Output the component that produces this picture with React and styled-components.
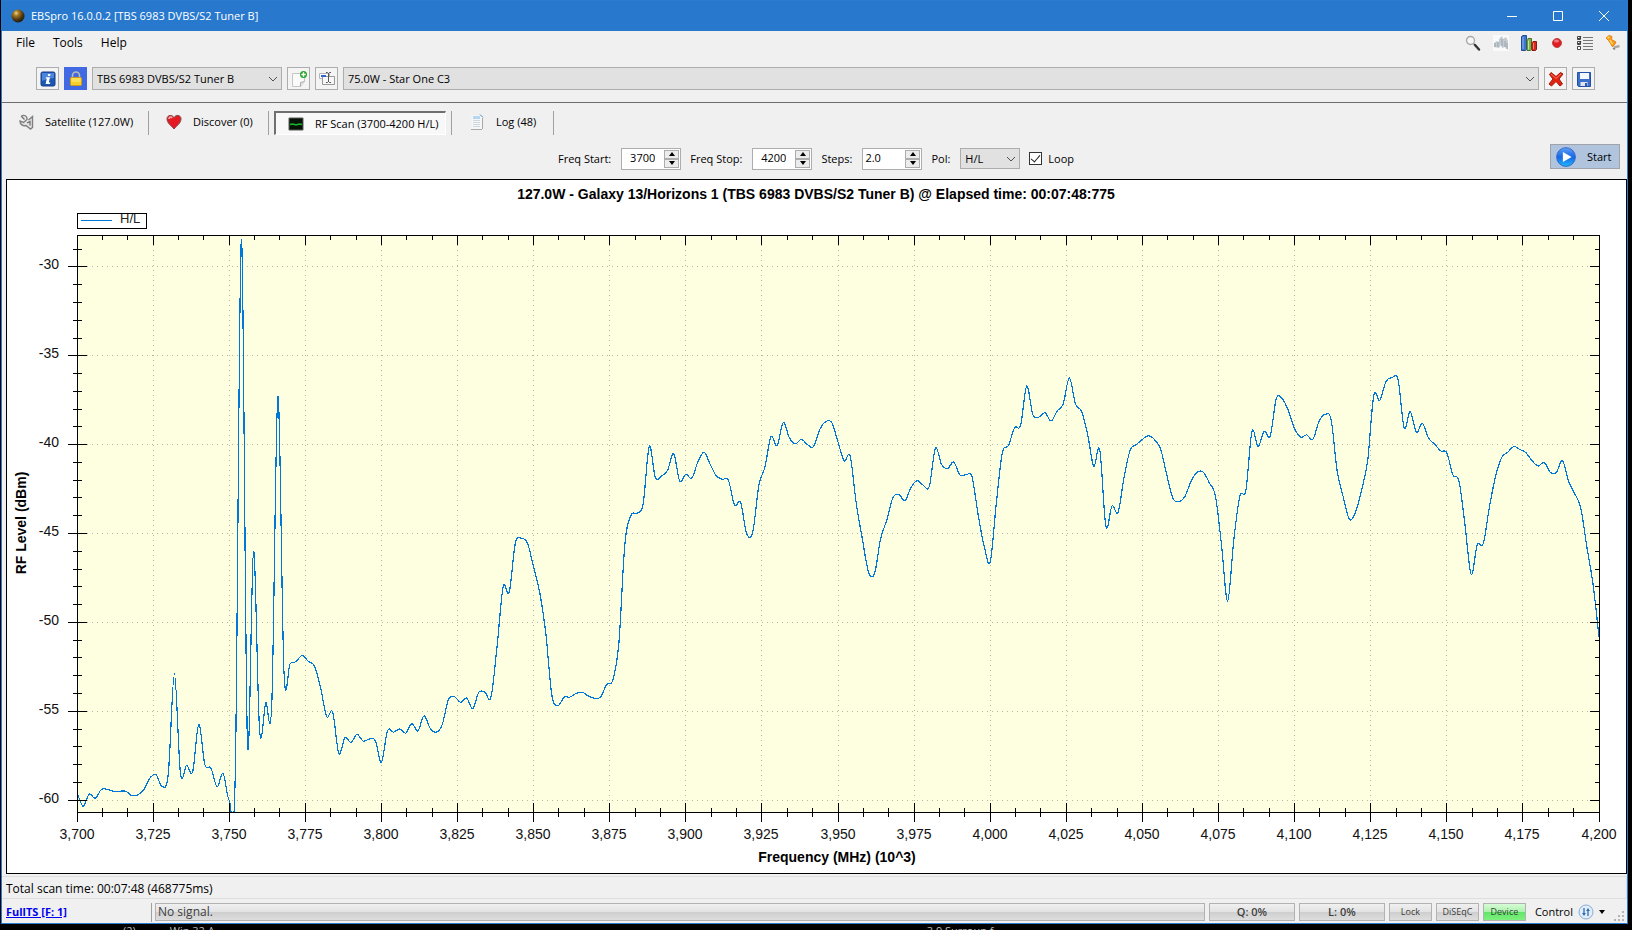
import React, { useState } from "react";
import styled, { createGlobalStyle } from "styled-components";

const GlobalStyle = createGlobalStyle`
  * {
    box-sizing: border-box;
  }
  body {
    margin: 0;
    background: #000;
    color: #000;
    font-family: "Open Sans", "Noto Sans", sans-serif;
    font-size: 11px;
    line-height: 16px;
  }
  button, input, select {
    margin: 0;
    padding: 0;
    font: inherit;
    color: inherit;
  }
`;

/* ---------- window ---------- */

const Desktop = styled.div`
  display: flex;
  flex-direction: column;
  min-height: 100vh;
  padding: 0 4px 0 1px;
`;

const Window = styled.main`
  flex: 1;
  display: flex;
  flex-direction: column;
  border: 1px solid #2b7cd0;
  background: #f0f0f0;
`;

const TitleBar = styled.header`
  display: flex;
  align-items: center;
  height: 30px;
  padding-left: 8px;
  gap: 5px;
  background: #2879cd;
  color: #fff;
  h1 {
    flex: 1;
    margin: 0;
    font-size: 11px;
    font-weight: 400;
  }
`;

const CaptionButtons = styled.div`
  display: flex;
`;

const CaptionButton = styled.button`
  display: flex;
  align-items: center;
  justify-content: center;
  width: 46px;
  height: 30px;
  border: 0;
  background: transparent;
`;

const MenuBar = styled.nav`
  display: flex;
  align-items: center;
  height: 24px;
  padding: 0 6px 0 14px;
`;

const MenuItem = styled.button`
  border: 0;
  background: transparent;
  font-size: 12px;
  margin-right: 18px;
`;

const QuickIcons = styled.div`
  display: flex;
  gap: 12px;
  margin-left: auto;
`;

const QuickButton = styled.button`
  width: 16px;
  height: 16px;
  border: 0;
  background: transparent;
  svg {
    display: block;
  }
`;

const DeviceBar = styled.div`
  display: flex;
  align-items: center;
  gap: 5px;
  height: 48px;
  padding: 0 32px 0 34px;
  border-bottom: 1px solid #6d6d6d;
`;

const SquareButton = styled.button`
  display: flex;
  align-items: center;
  justify-content: center;
  flex: none;
  width: 23px;
  height: 23px;
  border: 1px solid ${(p) => (p.$active ? "#4169e1" : "#adadad")};
  background: ${(p) => (p.$active ? "#4169e1" : "#f4f4f4")};
`;

const SelectBox = styled.div`
  position: relative;
  flex: ${(p) => (p.$width ? "none" : "1")};
  width: ${(p) => (p.$width ? `${p.$width}px` : "auto")};
  height: ${(p) => (p.$small ? 21 : 23)}px;
  select {
    width: 100%;
    height: 100%;
    padding: 0 20px 0 4px;
    border: 1px solid #adadad;
    border-radius: 0;
    background: #e1e1e1;
    appearance: none;
  }
  svg {
    position: absolute;
    top: 50%;
    right: 4px;
    margin-top: -3px;
    pointer-events: none;
  }
`;

/* ---------- tabs ---------- */

const TabBar = styled.div`
  display: flex;
  align-items: center;
  height: 40px;
  padding-left: 4px;
`;

const Tab = styled.button`
  display: flex;
  align-items: center;
  gap: 11px;
  width: ${(p) => p.$width}px;
  height: 24px;
  padding: ${(p) => (p.$active ? "0 0 0 12px" : "0 0 2px 11px")};
  border: 1px solid transparent;
  background: transparent;
  white-space: nowrap;
  ${(p) =>
    p.$active &&
    `
    border-color: #6f6f6f #fff #fff #6f6f6f;
    border-width: 2px 1px 1px 2px;
    background: #f8f8f8;
  `}
`;

const TabDivider = styled.span`
  width: 1px;
  height: 24px;
  margin: 0 5px;
  background: #a0a0a0;
`;

/* ---------- scan settings ---------- */

const ScanBar = styled.form`
  display: grid;
  grid-template-columns: 1fr auto 1fr;
  align-items: center;
  height: 36px;
  padding: 0 7px 9px 0;
`;

const ScanFields = styled.div`
  grid-column: 2;
  display: flex;
  align-items: center;
  gap: 9px;
  padding: 4px 0 0 10px;
`;

const Field = styled.label`
  display: flex;
  align-items: center;
  gap: 10px;
  white-space: nowrap;
`;

const CheckField = styled(Field)`
  gap: 6px;
  input {
    appearance: none;
    display: grid;
    place-items: center;
    width: 13px;
    height: 13px;
    border: 1px solid #333;
    background: #fff;
  }
  input:checked::after {
    content: "";
    width: 4px;
    height: 8px;
    margin-bottom: 2px;
    border: solid #222;
    border-width: 0 1px 1px 0;
    transform: rotate(40deg);
  }
`;

const SpinBox = styled.span`
  display: flex;
  width: 60px;
  height: 22px;
  padding: 1px;
  border: 1px solid #adadad;
  background: #fff;
  input {
    flex: 1;
    min-width: 0;
    height: 16px;
    padding: 0 9px 0 1px;
    border: 0;
    outline: 0;
    background: transparent;
    text-align: ${(p) => p.$align};
  }
`;

const SpinButtons = styled.span`
  display: grid;
  grid-template-rows: 1fr 1fr;
  width: 15px;
  button {
    display: flex;
    align-items: center;
    justify-content: center;
    border: 1px solid #adadad;
    background: #ececec;
  }
`;

const StartButton = styled.button`
  grid-column: 3;
  justify-self: end;
  display: flex;
  align-items: center;
  gap: 11px;
  width: 70px;
  height: 25px;
  padding-left: 5px;
  border: 1px solid #a0a3a8;
  background: #b0c4de;
`;

/* ---------- chart ---------- */

const ChartPanel = styled.section`
  flex: 1;
  min-height: 0;
  margin-left: 4px;
  border: 1px solid #000;
  background: #fff;
  svg {
    display: block;
    width: 100%;
    font-family: "Liberation Sans", Arial, sans-serif;
    font-size: 14px;
  }
`;

/* ---------- status ---------- */

const ScanStatus = styled.p`
  height: 23px;
  margin: 2px 0 0;
  padding: 4px 4px 0;
  border: 1px solid #dedede;
  border-left: 0;
  font-size: 12px;
`;

const StatusBar = styled.footer`
  display: flex;
  align-items: center;
  gap: 4px;
  height: 24px;
  padding: 2px 0 0 4px;
`;

const StreamLink = styled.a`
  width: 141px;
  color: #0000f0;
  font-weight: 700;
  font-size: 11px;
`;

const StatusDivider = styled.span`
  width: 1px;
  height: 19px;
  margin-right: -1px;
  background: #a0a0a0;
`;

const Gauge = styled.div`
  flex: ${(p) => (p.$width ? "none" : "1")};
  width: ${(p) => (p.$width ? `${p.$width}px` : "auto")};
  height: 18px;
  padding: 0 2px;
  border: 1px solid #b2b2b2;
  background: ${(p) =>
    p.$on
      ? "linear-gradient(#d8fbd8, #a9f3a9 50%, #5fe766 51%, #7ef07e)"
      : "linear-gradient(#f0f0f0, #e2e2e2 50%, #cecece 51%, #dedede)"};
  color: #404040;
  font-size: ${(p) => (p.$small ? 9 : p.$bold ? 11 : 12)}px;
  font-weight: ${(p) => (p.$bold ? 600 : 400)};
  text-align: ${(p) => (p.$width ? "center" : "left")};
`;

const ControlButton = styled.button`
  display: flex;
  align-items: center;
  gap: 5px;
  margin-left: 5px;
  border: 0;
  background: transparent;
`;

const Grip = styled.span`
  align-self: flex-end;
  margin: 0 2px 1px 5px;
  line-height: 0;
`;

// captions of whatever lies under the window
const Behind = styled.div`
  display: flex;
  height: 6px;
  overflow: hidden;
  padding-left: 122px;
  color: #bbb;
  line-height: 14px;
  span + span {
    margin-left: 34px;
  }
  span:last-child {
    margin-left: 712px;
  }
`;

/* ---------- icons ---------- */

const Icon = ({ size = 16, children }) => (
  <svg width={size} height={size} viewBox="0 0 16 16" fill="none" aria-hidden="true">
    {children}
  </svg>
);

const AppIcon = () => (
  <Icon>
    <defs>
      <radialGradient id="orb" cx="0.36" cy="0.28" r="0.8">
        <stop offset="0" stopColor="#f2d48a" />
        <stop offset="0.25" stopColor="#a67a25" />
        <stop offset="0.65" stopColor="#4a3410" />
        <stop offset="1" stopColor="#17130c" />
      </radialGradient>
    </defs>
    <circle cx="8" cy="8" r="6.5" fill="url(#orb)" />
  </Icon>
);

const SearchIcon = () => (
  <Icon>
    <circle cx="5.5" cy="5.5" r="4" fill="#f7f7f7" stroke="#a9a9a9" strokeWidth="1.4" />
    <path d="M8.5 8.5l1.5 1.5" stroke="#999" strokeWidth="1.5" />
    <path d="M10 10l4 4.5" stroke="#333" strokeWidth="2.4" strokeLinecap="round" />
  </Icon>
);

const BinocularsIcon = () => (
  <Icon>
    <rect width="16" height="16" fill="#fafafa" />
    <path d="M1 12V8l3-2 2 1V4l3-3 1 3 3-2 2 4v9l-3-3-3 1-1-3-2 3z" fill="#c3cbd0" />
    <path d="M2 12V8M5 12V7M9 11V4M12 12V6M14 14V8" stroke="#99a5ac" />
  </Icon>
);

const BarsIcon = () => (
  <Icon>
    <path d="M.5 1.5l1.5-1h3.500v14l-1 1h-4z" fill="#3f74cf" stroke="#224b96" />
    <path d="M2 2v12" stroke="#8db4f2" />
    <path d="M6 4.500l1-1h3.500v11l-1 1H6z" fill="#7fb24a" stroke="#47752a" />
    <path d="M7.500 5.500v9" stroke="#c7e29f" />
    <path d="M11 7.500l1-1h3.500v8l-1 1H11z" fill="#d9291c" stroke="#8d1713" />
    <path d="M12.500 8v6" stroke="#f48379" />
  </Icon>
);

const RecordIcon = () => (
  <Icon>
    <circle cx="8" cy="8" r="4.5" fill="#e01d20" stroke="#b9484b" />
    <ellipse cx="7.5" cy="6" rx="2.5" ry="1.5" fill="#f4787b" />
  </Icon>
);

const ListIcon = () => (
  <Icon>
    <path d="M6 2.500h10M6 5.500h10M6 8.500h10M6 11.500h10M6 14.500h10" stroke="#777" />
    <path d="M.5 1.500h3v3h-3zM.5 6.500h3v3h-3zM.5 11.500h3v3h-3z" fill="#fff" stroke="#444" />
    <path d="M1 3l1 1 2-3M1 8l1 1 2-3" stroke="#333" />
  </Icon>
);

const PinIcon = () => (
  <Icon>
    <path d="M9 12.500l5.500-1.500" stroke="#aaa" strokeWidth="2.5" />
    <path d="M1 3l3-2.500 3 1-.5 3L11 7l-1 2-2.500 3-2-3.500-2-3z" fill="#f79b18" stroke="#e4871a" />
    <path d="M2.500 3l2-1M5 5l2.500 4" stroke="#ffd36c" strokeWidth="1.5" />
    <path d="M8 13l2 1.500" stroke="#777" strokeWidth="1.5" />
  </Icon>
);

const InfoIcon = () => (
  <Icon>
    <rect x="1" y="1" width="14" height="14" rx="1.5" fill="#1d57b4" stroke="#163f86" />
    <path d="M2 2h12v5Q8 7 2 10z" fill="#4b86dc" />
    <path d="M8.200 3h2.300l-.4 2H7.800zM6 6.200h4L8.800 11.500h1.500l-.4 1.500H5.600l1.200-5.500H5.700z" fill="#fff" />
  </Icon>
);

const LockIcon = () => (
  <Icon>
    <path d="M4.500 7V4.500a3.500 3.500 0 0 1 7 0V7" stroke="#b9bcae" strokeWidth="1.6" />
    <rect x="2.5" y="6.5" width="11" height="8" rx="1" fill="#f6cf2e" stroke="#c99b17" />
    <path d="M3.500 8h9M3.500 10h9" stroke="#ffee86" />
  </Icon>
);

const NewPageIcon = () => (
  <Icon>
    <path d="M1.500 2.500h12v8l-4 5h-8z" fill="#fafafa" stroke="#c5c5c5" />
    <path d="M9.500 15.500v-4l4-1" stroke="#aaa" fill="#e6e6e6" />
    <circle cx="12.5" cy="3.5" r="3.5" fill="#27a52c" />
    <path d="M12.500 1.300v4.400M10.300 3.500h4.400" stroke="#fff" strokeWidth="1.4" />
  </Icon>
);

const RenameIcon = () => (
  <Icon>
    <path d="M.5 2.500h10v5H.5z" fill="#fff" stroke="#b5b5b5" />
    <path d="M2 4h5v2H2z" fill="#2f66d0" />
    <path d="M3.500 5.500h12v8h-12z" fill="#f7f7f7" stroke="#999" />
    <path d="M2 4.500h5v1.500H2z" fill="#2f66d0" />
    <path d="M9.500 2v9M7 1.500h1.500l1 1 1-1H12M7 11.500h1.500l1-1 1 1H12" stroke="#555" />
  </Icon>
);

const DeleteIcon = () => (
  <Icon>
    <path
      d="M3 1.500l5 4 4.500-4L15 3l-4 5 3.500 5-2.500 2-4-4.500L3.500 15 1 13l4-5-3.500-4.500z"
      fill="#e2230f"
      stroke="#a5170c"
    />
    <path d="M3 3l5 4.500L13 3" stroke="#f8745e" />
  </Icon>
);

const SaveIcon = () => (
  <Icon>
    <path d="M1.500 1.500h13v14h-12l-1-1z" fill="#3c6fca" stroke="#234fa4" />
    <path d="M4 2h9v6H4z" fill="#f3f7ff" />
    <path d="M4.500 11h7v4h-7z" fill="#e1e5ea" />
    <path d="M9 12h2v3H9z" fill="#2a5bb7" />
  </Icon>
);

const DishIcon = () => (
  <Icon>
    <path
      d="M3 2.500C6 0 9.500 2 9 5.500L5.500 8.500 2 7c0 3.500 3 5.500 6 4.500l4.500 3.500 2-1.500V2.500L10.500 6"
      fill="#e4e4e4"
      stroke="#7f7f7f"
      strokeWidth="1.4"
    />
    <path d="M3.500 2.500l3 3M9 9l3-1.500v4" stroke="#6a6a6a" strokeWidth="1.2" />
  </Icon>
);

const HeartIcon = () => (
  <Icon>
    <path
      d="M8 15C5 11.500 1 9 1 4.800 1 .8 6.500.2 8 3.800c1.500-3.600 7-3 7 1C15 9 11 11.500 8 15z"
      fill="#e31a22"
      stroke="#7f4a4c"
    />
    <path d="M3 5c.2-2 2-2.500 3.200-1.200" stroke="#ffaaad" strokeWidth="1.7" />
  </Icon>
);

const ScopeIcon = () => (
  <Icon>
    <path d="M1 2h14v12H1z" fill="#051305" stroke="#5a5a5a" />
    <path d="M2 8.500l3-.5 3 1 3-1 3 .5" stroke="#18b52b" strokeWidth="1.4" />
  </Icon>
);

const LogIcon = () => (
  <Icon>
    <path d="M2.500 1h9l2 2v12h-11z" fill="#f4f6f8" />
    <path d="M2 15.500h11M13.500 4v11" stroke="#a9a9a9" />
    <path d="M4 3.500h7" stroke="#b7d6ef" strokeWidth="3" />
    <path d="M4 6.500h7M4 8.500h7M4 10.500h7M4 12.500h7" stroke="#cfd6dc" />
    <path d="M11 .5l3 3" stroke="#4f86ad" />
  </Icon>
);

const PlayIcon = () => (
  <Icon size={20}>
    <defs>
      <linearGradient id="play" x2="0" y2="1">
        <stop offset="0" stopColor="#5fa0f5" />
        <stop offset="0.5" stopColor="#1767e6" />
        <stop offset="1" stopColor="#22b7fb" />
      </linearGradient>
    </defs>
    <circle cx="8" cy="8" r="7.5" fill="url(#play)" stroke="#2a5fc4" strokeWidth="0.7" />
    <path d="M5.500 4l7 4-7 4z" fill="#fff" />
  </Icon>
);

const ControlIcon = () => (
  <Icon>
    <circle cx="8" cy="8" r="7" fill="#e3edf8" stroke="#86add8" />
    <path d="M6 4v6M10 6v6" stroke="#2f6fb8" strokeWidth="1.3" />
    <path d="M4 9l2 3 2-3zM8 7l2-3 2 3z" fill="#2f6fb8" />
  </Icon>
);

const Chevron = () => (
  <svg width="10" height="6" viewBox="0 0 10 6" fill="none" aria-hidden="true">
    <path d="M1 1l4 4 4-4" stroke="#505050" />
  </svg>
);

const Triangle = ({ down, size = 6 }) => (
  <svg width={size} height={size / 2 + 1} viewBox="0 0 6 4" aria-hidden="true">
    <path d={down ? "M0 0h6L3 4z" : "M0 4h6L3 0z"} fill="#000" />
  </svg>
);

/* ---------- scan data ---------- */

// RF level in dBm, one reading every 2 MHz from 3700 to 4200
const LEVELS = [
  -59.55, -60.35, -59.66, -59.9, -59.4, -59.4, -59.5, -59.5, -59.5, -59.75,
  -59.7, -59.4, -58.75, -58.58, -59.25, -58.5, -52.9, -58.5, -58.05, -58.4,
  -55.75, -58, -58.2, -59.25, -58.5, -60, -58.5, -28.46, -56.75, -45.99,
  -56.1, -54.53, -54.5, -37.27, -52.8, -52.32, -52.2, -51.85, -52.2, -52.45,
  -53.65, -55.3, -55.05, -57.37, -56.5, -56.75, -56.3, -56.68, -56.57, -56.65,
  -57.87, -56.1, -56.18, -56, -56.23, -55.7, -56.1, -55.26, -55.95, -56.18,
  -55.75, -54.35, -54.18, -54.5, -54.25, -54.85, -53.93, -53.93, -54.2, -51.35,
  -48, -48.3, -45.55, -45.27, -45.55, -46.9, -48.3, -50.6, -54.1, -54.68,
  -54.22, -54.2, -54, -53.93, -54.15, -54.27, -54.2, -53.5, -53.25, -51.2,
  -45.55, -43.97, -43.87, -43.3, -40.1, -41.85, -41.76, -41.45, -40.5, -42.05,
  -41.67, -41.87, -40.95, -40.43, -41.1, -41.75, -41.95, -42, -43.4, -43.25,
  -45, -44.9, -42.3, -41.25, -39.55, -40.05, -38.75, -39.6, -39.95, -39.7,
  -40, -40.1, -39.15, -38.7, -38.77, -39.85, -40.9, -40.65, -43.3, -45.3,
  -47.15, -47.25, -45.3, -44.25, -43, -42.8, -43.15, -42.4, -42.02, -42.28,
  -42.35, -40.2, -41.1, -41.35, -40.97, -41.7, -41.7, -41.8, -43.9, -45.7,
  -46.6, -43.3, -40.45, -40.05, -39.05, -38.9, -36.7, -38.3, -38.45, -38.2,
  -38.67, -38.1, -37.7, -36.23, -37.7, -38.13, -39.4, -41.2, -40.3, -44.6,
  -43.45, -43.8, -41.8, -40.3, -40, -39.7, -39.5, -39.72, -40.25, -41.7,
  -43, -43.2, -42.9, -42.05, -41.55, -41.55, -42.15, -42.9, -45.65, -48.8,
  -45.4, -42.9, -42.55, -39.25, -40.1, -39.25, -39.5, -37.4, -37.43, -38.1,
  -39.1, -39.57, -39.45, -39.7, -38.7, -38.3, -38.6, -41.5, -42.95, -44.2,
  -43.8, -42.55, -40.9, -37.25, -37.5, -36.45, -36.23, -36.35, -39.05, -38.15,
  -39.3, -38.8, -39.63, -39.97, -40.35, -40.45, -41.7, -42.05, -44.55, -47.3,
  -45.65, -45.55, -43.5, -41.8, -40.73, -40.43, -40.1, -40.27, -40.45, -40.9,
  -41.2, -41, -41.55, -41.55, -40.9, -42.05, -42.75, -43.55, -45.75, -47.8,
  -50.8,
];

const PLOT = { left: 70, top: 55, width: 1522, height: 577 };
const RIGHT = PLOT.left + PLOT.width;
const BOTTOM = PLOT.top + PLOT.height;
const LEVEL_MAX = -28.2;
const PX_PER_DB = 17.77;

const xOf = (freq) => PLOT.left + ((freq - 3700) / 500) * PLOT.width;
const yOf = (level) => PLOT.top + (LEVEL_MAX - level) * PX_PER_DB;
const snap = (n) => Math.floor(n) + 0.5;

// smooth line through every reading
function getTracePath() {
  const pts = LEVELS.map((level, i) => [xOf(3700 + i * 2), yOf(level)]);
  let d = `M${pts[0]}`;
  for (let i = 0; i < pts.length - 1; i++) {
    const p0 = pts[i - 1] || pts[i];
    const p1 = pts[i];
    const p2 = pts[i + 1];
    const p3 = pts[i + 2] || p2;
    const c1 = [p1[0] + (p2[0] - p0[0]) / 6, p1[1] + (p2[1] - p0[1]) / 6];
    const c2 = [p2[0] - (p3[0] - p1[0]) / 6, p2[1] - (p3[1] - p1[1]) / 6];
    d += `C${c1} ${c2} ${p2}`;
  }
  return d;
}

const xTicks = Array.from({ length: 61 }, (_, i) => ({
  x: snap(xOf(3700 + (i * 25) / 3)),
  major: i % 3 === 0,
  label: (3700 + (i / 3) * 25).toLocaleString("en-US"),
}));

const yTicks = Array.from({ length: 32 }, (_, i) => ({
  y: snap(yOf(-29 - i)),
  major: (29 + i) % 5 === 0,
  label: -29 - i,
}));

function RfChart() {
  return (
    <svg viewBox="0 0 1619 693" role="img" aria-label="RF Scan">
      <defs>
        <clipPath id="plotArea">
          <rect x={PLOT.left} y={PLOT.top} width={PLOT.width} height={PLOT.height} />
        </clipPath>
      </defs>
      <text x="809" y="19" textAnchor="middle" fontWeight="700">
        127.0W - Galaxy 13/Horizons 1 (TBS 6983 DVBS/S2 Tuner B) @ Elapsed time: 00:07:48:775
      </text>

      <g shapeRendering="crispEdges">
        <rect x="70.5" y="33.5" width="69" height="15" fill="#fff" stroke="#000" />
        <path d="M74 40.5h31" stroke="#0078d7" />
      </g>
      <text x="113" y="43" fontSize="13" fill="#222">
        H/L
      </text>

      <g shapeRendering="crispEdges">
        <rect
          x={PLOT.left + 0.5}
          y={PLOT.top + 0.5}
          width={PLOT.width}
          height={PLOT.height}
          fill="#fdffe0"
        />
        <g stroke="#b4b5a0" strokeDasharray="1 4">
          {xTicks
            .filter((t) => t.major)
            .map((t) => (
              <path key={t.x} d={`M${t.x} ${PLOT.top}V${BOTTOM}`} />
            ))}
          {yTicks
            .filter((t) => t.major)
            .map((t) => (
              <path key={t.y} d={`M${PLOT.left} ${t.y}H${RIGHT}`} />
            ))}
        </g>
        <path
          d={getTracePath()}
          fill="none"
          stroke="#0078d7"
          strokeWidth="1.2"
          clipPath="url(#plotArea)"
        />
        <g stroke="#000" fill="none">
          <rect
            x={PLOT.left + 0.5}
            y={PLOT.top + 0.5}
            width={PLOT.width}
            height={PLOT.height}
          />
          {xTicks.map((t) => {
            const len = t.major ? 9 : 4;
            return (
              <path
                key={t.x}
                d={`M${t.x} ${BOTTOM - len}v${len * 2 + 1}M${t.x} ${PLOT.top}v${len + 1}`}
              />
            );
          })}
          {yTicks.map((t) => {
            const len = t.major ? 9 : 4;
            return (
              <path
                key={t.y}
                d={`M${PLOT.left - len} ${t.y}h${len * 2 + 1}M${RIGHT - len} ${t.y}h${len}`}
              />
            );
          })}
        </g>
      </g>

      <g textAnchor="middle" fill="#111">
        {xTicks
          .filter((t) => t.major)
          .map((t) => (
            <text key={t.x} x={t.x - 0.5} y="659">
              {t.label}
            </text>
          ))}
      </g>
      <g textAnchor="end" fill="#111">
        {yTicks
          .filter((t) => t.major)
          .map((t) => (
            <text key={t.y} x="52" y={t.y + 2.5}>
              {t.label}
            </text>
          ))}
      </g>
      <text x="830" y="682" textAnchor="middle" fontWeight="700">
        Frequency (MHz) (10^3)
      </text>
      <text textAnchor="middle" fontWeight="700" transform="translate(19 343) rotate(-90)">
        RF Level (dBm)
      </text>
    </svg>
  );
}

function SpinField({ label, initial, step, digits = 0, align = "right" }) {
  const [value, setValue] = useState(initial);
  const change = (amount) => setValue((Number(value) + amount).toFixed(digits));

  return (
    <Field>
      {label}
      <SpinBox $align={align}>
        <input value={value} onChange={(e) => setValue(e.target.value)} />
        <SpinButtons>
          <button type="button" aria-label="Up" onClick={() => change(step)}>
            <Triangle />
          </button>
          <button type="button" aria-label="Down" onClick={() => change(-step)}>
            <Triangle down />
          </button>
        </SpinButtons>
      </SpinBox>
    </Field>
  );
}

const quickActions = [
  { name: "Search", icon: <SearchIcon /> },
  { name: "Find", icon: <BinocularsIcon /> },
  { name: "Charts", icon: <BarsIcon /> },
  { name: "Record", icon: <RecordIcon /> },
  { name: "List", icon: <ListIcon /> },
  { name: "Pin", icon: <PinIcon /> },
];

const tabs = [
  { id: "satellite", label: "Satellite (127.0W)", icon: <DishIcon />, width: 137 },
  { id: "discover", label: "Discover (0)", icon: <HeartIcon />, width: 109 },
  { id: "scan", label: "RF Scan (3700-4200 H/L)", icon: <ScopeIcon />, width: 172 },
  { id: "log", label: "Log (48)", icon: <LogIcon />, width: 91 },
];

export default function App() {
  const [activeTab, setActiveTab] = useState("scan");
  const [loop, setLoop] = useState(true);

  return (
    <>
      <GlobalStyle />
      <Desktop>
        <Window>
          <TitleBar>
            <AppIcon />
            <h1>EBSpro 16.0.0.2 [TBS 6983 DVBS/S2 Tuner B]</h1>
            <CaptionButtons>
              <CaptionButton aria-label="Minimize">
                <svg width="10" height="10">
                  <path d="M0 5.5h10" stroke="#fff" />
                </svg>
              </CaptionButton>
              <CaptionButton aria-label="Maximize">
                <svg width="10" height="10">
                  <path d="M.5 .5h9v9h-9z" stroke="#fff" fill="none" />
                </svg>
              </CaptionButton>
              <CaptionButton aria-label="Close">
                <svg width="10" height="10">
                  <path d="M0 0l10 10M10 0L0 10" stroke="#fff" />
                </svg>
              </CaptionButton>
            </CaptionButtons>
          </TitleBar>

          <MenuBar>
            <MenuItem>File</MenuItem>
            <MenuItem>Tools</MenuItem>
            <MenuItem>Help</MenuItem>
            <QuickIcons>
              {quickActions.map((action) => (
                <QuickButton key={action.name} aria-label={action.name}>
                  {action.icon}
                </QuickButton>
              ))}
            </QuickIcons>
          </MenuBar>

          <DeviceBar>
            <SquareButton aria-label="Info">
              <InfoIcon />
            </SquareButton>
            <SquareButton $active aria-label="Lock">
              <LockIcon />
            </SquareButton>
            <SelectBox $width={190}>
              <select aria-label="Device">
                <option>TBS 6983 DVBS/S2 Tuner B</option>
              </select>
              <Chevron />
            </SelectBox>
            <SquareButton aria-label="New">
              <NewPageIcon />
            </SquareButton>
            <SquareButton aria-label="Rename">
              <RenameIcon />
            </SquareButton>
            <SelectBox>
              <select aria-label="Satellite">
                <option>75.0W - Star One C3</option>
              </select>
              <Chevron />
            </SelectBox>
            <SquareButton aria-label="Delete">
              <DeleteIcon />
            </SquareButton>
            <SquareButton aria-label="Save">
              <SaveIcon />
            </SquareButton>
          </DeviceBar>

          <TabBar>
            {tabs.map((tab) => (
              <React.Fragment key={tab.id}>
                <Tab
                  $active={tab.id === activeTab}
                  $width={tab.width}
                  onClick={() => setActiveTab(tab.id)}
                >
                  {tab.icon}
                  {tab.label}
                </Tab>
                <TabDivider />
              </React.Fragment>
            ))}
          </TabBar>

          <ScanBar onSubmit={(e) => e.preventDefault()}>
            <ScanFields>
              <SpinField label="Freq Start:" initial="3700" step={1} />
              <SpinField label="Freq Stop:" initial="4200" step={1} />
              <SpinField label="Steps:" initial="2.0" step={0.5} digits={1} align="left" />
              <Field>
                Pol:
                <SelectBox $width={60} $small>
                  <select>
                    <option>H/L</option>
                  </select>
                  <Chevron />
                </SelectBox>
              </Field>
              <CheckField>
                <input
                  type="checkbox"
                  checked={loop}
                  onChange={(e) => setLoop(e.target.checked)}
                />
                Loop
              </CheckField>
            </ScanFields>
            <StartButton type="submit">
              <PlayIcon />
              Start
            </StartButton>
          </ScanBar>

          <ChartPanel>
            <RfChart />
          </ChartPanel>

          <ScanStatus>Total scan time: 00:07:48 (468775ms)</ScanStatus>
          <StatusBar>
            <StreamLink href="#stream">FullTS [F: 1]</StreamLink>
            <StatusDivider />
            <Gauge>No signal.</Gauge>
            <Gauge $width={86} $bold>
              Q: 0%
            </Gauge>
            <Gauge $width={86} $bold>
              L: 0%
            </Gauge>
            <Gauge $width={43} $small>
              Lock
            </Gauge>
            <Gauge $width={43} $small>
              DiSEqC
            </Gauge>
            <Gauge $width={43} $small $on>
              Device
            </Gauge>
            <ControlButton>
              Control
              <ControlIcon />
              <Triangle down />
            </ControlButton>
            <Grip>
              <svg width="11" height="11" fill="#b5b5b5" aria-hidden="true">
                <path d="M8 0h2v2H8zM4 4h2v2H4zM8 4h2v2H8zM0 8h2v2H0zM4 8h2v2H4zM8 8h2v2H8z" />
              </svg>
            </Grip>
          </StatusBar>
        </Window>
        <Behind aria-hidden="true">
          <span>(2)</span>
          <span>Win 32 A</span>
          <span>3.9 Surroun f</span>
        </Behind>
      </Desktop>
    </>
  );
}
